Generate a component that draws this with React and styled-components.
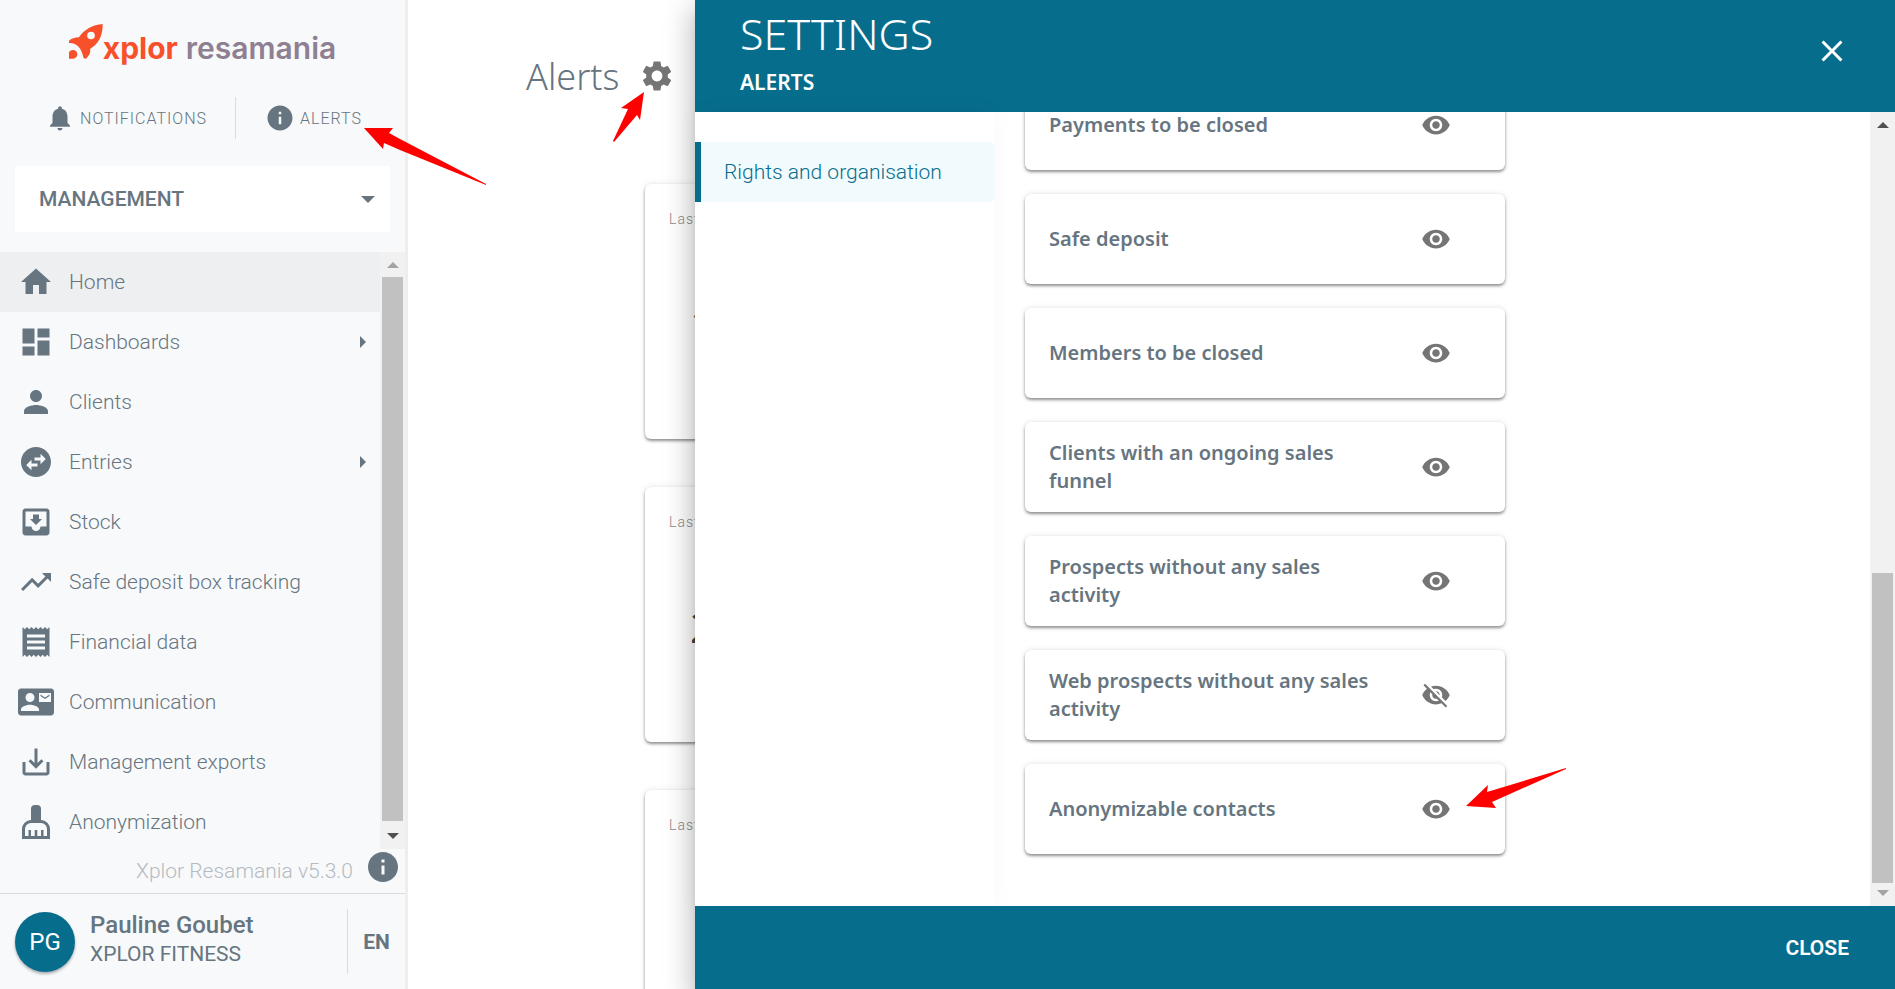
import styled, { createGlobalStyle } from "styled-components";
import {
    MdClose,
    MdContactMail,
    MdDashboard,
    MdHome,
    MdInfo,
    MdMoveToInbox,
    MdNotifications,
    MdPerson,
    MdReceipt,
    MdSaveAlt,
    MdSettings,
    MdSwapHorizontalCircle,
    MdTrendingUp,
    MdVisibility,
    MdVisibilityOff,
} from "react-icons/md";

const GlobalStyle = createGlobalStyle`
  * {
    box-sizing: border-box;
  }

  body {
    margin: 0;
    background: #fff;
    color: #667580;
    font-family: Roboto, sans-serif;
    font-size: 21px;
  }

  button, select {
    border: 0;
    padding: 0;
    background: none;
    color: inherit;
    font: inherit;
    cursor: pointer;
  }

  a {
    color: inherit;
    text-decoration: none;
  }

  h1, h2, p, ul {
    margin: 0;
    padding: 0;
  }

  ul {
    list-style: none;
  }

  svg {
    display: block;
    flex-shrink: 0;
  }
`;

const Page = styled.div`
  display: flex;
  height: 100vh;
  overflow: hidden;
`;

const Sidebar = styled.aside`
  display: flex;
  flex-direction: column;
  flex: 0 0 408px;
  background: #f8f9fb;
  border-right: 3px solid #eee;
`;

const Logo = styled.a`
  display: flex;
  justify-content: center;
  height: 84px;
  padding-top: 24px;
  font-family: Inter, sans-serif;
  font-size: 30px;
  line-height: 48px;
  .brand {
    color: #f8502a;
    font-weight: 700;
  }
  .product {
    margin-left: 8px;
    color: #8f7f92;
    font-weight: 600;
  }
`;

const TopLinks = styled.nav`
  display: flex;
  align-items: center;
  height: 68px;
`;

const TopLink = styled.a`
  display: flex;
  align-items: center;
  justify-content: flex-end;
  width: ${(props) => props.$width};
  gap: 5px;
  font-size: 16px;
  font-weight: 300;
  letter-spacing: 1px;
`;

const Divider = styled.span`
  width: 1px;
  height: ${(props) => props.$height};
  margin-left: ${(props) => props.$space || "0"};
  background: #d9dce0;
`;

const SelectBox = styled.label`
  display: flex;
  align-items: center;
  height: 66px;
  margin: 14px 15px 20px;
  padding-right: 15px;
  background: #fff;
  select {
    flex: 1;
    height: 66px;
    padding-left: 24px;
    appearance: none;
    font-weight: 500;
    outline: none;
  }
`;

const Triangle = styled.span`
  width: 0;
  height: 0;
  border: solid transparent;
  ${(props) => props.$dir === "down" && `
    border-width: ${props.$size}px ${props.$size}px 0;
    border-top-color: ${props.$color};
  `}
  ${(props) => props.$dir === "up" && `
    border-width: 0 ${props.$size}px ${props.$size}px;
    border-bottom-color: ${props.$color};
  `}
  ${(props) => props.$dir === "right" && `
    border-width: ${props.$size}px 0 ${props.$size}px ${props.$size}px;
    border-left-color: ${props.$color};
  `}
`;

const MenuArea = styled.div`
  display: flex;
  flex: 1;
  min-height: 0;
`;

const Menu = styled.ul`
  flex: 1;
  overflow: hidden;
`;

const MenuLink = styled.a`
  display: flex;
  align-items: center;
  height: 60px;
  gap: 15px;
  padding: 0 14px 0 18px;
  background: ${(props) => (props.$active ? "#eeeff0" : "transparent")};
  font-weight: 300;
  .label {
    flex: 1;
  }
`;

const Track = styled.div`
  display: flex;
  flex-direction: column;
  align-items: center;
  width: 25px;
  padding: 10px 0;
  background: #f1f1f1;
`;

const Thumb = styled.div`
  flex: 1;
  width: 21px;
  margin: ${(props) => props.$margin};
  background: #c1c1c1;
`;

const Version = styled.div`
  display: flex;
  align-items: center;
  justify-content: flex-end;
  height: 44px;
  gap: 12px;
  padding: 0 4px 8px 0;
  p {
    padding-top: 8px;
    color: #b5bbc1;
    font-weight: 300;
  }
`;

const Account = styled.footer`
  display: flex;
  align-items: center;
  height: 96px;
  padding-left: 15px;
  border-top: 1px solid #d9dce0;
  .who {
    flex: 1;
    padding: 0 0 6px 15px;
  }
  .name {
    font-size: 24px;
    font-weight: 500;
    line-height: 30px;
  }
  .club {
    line-height: 28px;
  }
`;

const Avatar = styled.div`
  width: 60px;
  height: 60px;
  border-radius: 50%;
  background: #076d8c;
  box-shadow: 0 2px 3px rgba(0, 0, 0, 0.3);
  color: #fff;
  font-size: 24px;
  line-height: 60px;
  text-align: center;
`;

const Language = styled.button`
  width: 57px;
  font-weight: 700;
`;

const Main = styled.main`
  flex: 1;
  overflow: hidden;
  padding: 52px 0 0 118px;
`;

const Title = styled.h1`
  display: flex;
  align-items: center;
  height: 48px;
  gap: 20px;
  font-family: "Noto Sans", sans-serif;
  font-size: 36px;
  font-weight: 300;
`;

const Tiles = styled.div`
  display: grid;
  gap: 48px;
  padding: 84px 40px 0 119px;
`;

const Tile = styled.section`
  height: 255px;
  padding: 24px;
  border-radius: 6px;
  background: #fff;
  box-shadow: 0 2px 3px rgba(0, 0, 0, 0.4), 0 0 6px rgba(0, 0, 0, 0.1);
  .updated {
    color: #8b8b8b;
    font-size: 14px;
    font-weight: 300;
    letter-spacing: 1px;
    line-height: 22px;
  }
  .count {
    padding: 64px 21px 0;
    color: #444;
    font-family: "Noto Sans", sans-serif;
    font-size: 42px;
    line-height: 60px;
  }
`;

const Drawer = styled.div`
  position: absolute;
  top: 0;
  right: 0;
  bottom: 0;
  left: 695px;
  display: flex;
  flex-direction: column;
  background: #fff;
  box-shadow:
    0 8px 10px -5px rgba(0, 0, 0, 0.2),
    0 16px 24px 2px rgba(0, 0, 0, 0.14),
    0 6px 30px 5px rgba(0, 0, 0, 0.12);
`;

const DrawerHeader = styled.header`
  display: flex;
  align-items: center;
  justify-content: space-between;
  height: 112px;
  padding: 0 45px 6px;
  background: #076d8c;
  color: #fff;
  font-family: "Noto Sans", sans-serif;
  h2 {
    font-size: 43px;
    font-weight: 300;
    line-height: 58px;
  }
  p {
    font-weight: 600;
    line-height: 38px;
  }
`;

const CloseButton = styled.button`
  padding-bottom: 4px;
`;

const DrawerBody = styled.div`
  display: flex;
  flex: 1;
  min-height: 0;
`;

const Sections = styled.nav`
  width: 300px;
  padding-top: 30px;
  box-shadow: 0 0 24px rgba(0, 0, 0, 0.03);
`;

const SectionLink = styled.a`
  display: block;
  border-left: 6px solid #076d8c;
  border-radius: 0 6px 6px 0;
  padding-left: 23px;
  background: #f1fbfe;
  color: #076d8c;
  font-weight: 300;
  line-height: 60px;
`;

const Settings = styled.ul`
  display: flex;
  flex: 1;
  flex-direction: column;
  justify-content: flex-end;
  gap: 24px;
  overflow: hidden;
  padding: 0 30px 52px;
`;

const SettingCard = styled.li`
  display: flex;
  flex-shrink: 0;
  align-items: center;
  justify-content: space-between;
  width: 480px;
  height: 90px;
  padding: 0 54px 0 24px;
  border-radius: 6px;
  box-shadow: 0 2px 3px rgba(0, 0, 0, 0.4), 0 0 6px rgba(0, 0, 0, 0.1);
  font-family: "Noto Sans", sans-serif;
  font-size: 20px;
  font-weight: 600;
  line-height: 28px;
  p {
    width: 336px;
  }
  button {
    color: #757575;
  }
`;

const DrawerFooter = styled.footer`
  display: flex;
  align-items: center;
  justify-content: flex-end;
  height: 83px;
  padding-right: 46px;
  background: #076d8c;
  color: #fff;
  button {
    font-weight: 600;
  }
`;

const Pointer = styled.svg`
  position: absolute;
  top: ${(props) => props.$top}px;
  left: ${(props) => props.$left}px;
  fill: #f00;
  pointer-events: none;
`;

function Rocket(){
    return (
        <svg width="34" height="35" viewBox="204 74 102 105" aria-hidden="true">
            <path
                fill="#f8502a"
                fillRule="evenodd"
                d="M305 74C275 76 249 91 234 114C222 114 210 118 204 124V131C228 130 241 146 247 173C248 179 254 180 258 175C265 167 270 159 267 149C291 136 306 110 305 74ZM270 97a11.500 11.500 0 1 1 0 23a11.500 11.500 0 1 1 0-23Z"
            />
            <path fill="#f8502a" d="M204 178V158C207 153 213 151 218 152C225 153 229 159 229 165C229 172 224 178 216 178Z" />
        </svg>
    )
}

function Brush({ size }){
    return (
        <svg width={size} height={size} viewBox="0 0 36 36" fill="currentColor" aria-hidden="true">
            <path d="M13 17V5a4 4 0 0 1 4-4h2a4 4 0 0 1 4 4v12z" />
            <path
                fillRule="evenodd"
                d="M4 35V25a9 9 0 0 1 9-9h10a9 9 0 0 1 9 9v10zM7 32h3.500v-6h2.500v6h3.700v-6h2.600v6h3.700v-6h2.500v6H29v-7a6 6 0 0 0-6-6H13a6 6 0 0 0-6 6z"
            />
        </svg>
    )
}

const menu = [
    { label: "Home", Icon: MdHome, active: true },
    { label: "Dashboards", Icon: MdDashboard, more: true },
    { label: "Clients", Icon: MdPerson },
    { label: "Entries", Icon: MdSwapHorizontalCircle, more: true },
    { label: "Stock", Icon: MdMoveToInbox },
    { label: "Safe deposit box tracking", Icon: MdTrendingUp },
    { label: "Financial data", Icon: MdReceipt },
    { label: "Communication", Icon: MdContactMail },
    { label: "Management exports", Icon: MdSaveAlt },
    { label: "Anonymization", Icon: Brush },
];

const settings = [
    { label: "Payments to be closed", visible: true },
    { label: "Safe deposit", visible: true },
    { label: "Members to be closed", visible: true },
    { label: "Clients with an ongoing sales funnel", visible: true },
    { label: "Prospects without any sales activity", visible: true },
    { label: "Web prospects without any sales activity", visible: false },
    { label: "Anonymizable contacts", visible: true },
];

const tiles = [
    { id: "payments", count: "1" },
    { id: "deposits", count: "2" },
    { id: "members", count: "" },
];

function App(){
    return (
        <Page>
            <GlobalStyle />
            <Sidebar>
                <Logo href="#">
                    <Rocket />
                    <span className="brand">xplor</span>
                    <span className="product">resamania</span>
                </Logo>
                <TopLinks>
                    <TopLink href="#" $width="207px"><MdNotifications size={30} />NOTIFICATIONS</TopLink>
                    <Divider $height="42px" $space="28px" />
                    <TopLink href="#" $width="126px"><MdInfo size={30} />ALERTS</TopLink>
                </TopLinks>
                <SelectBox>
                    <select aria-label="Workspace">
                        <option>MANAGEMENT</option>
                    </select>
                    <Triangle $dir="down" $size={7} $color="#667580" />
                </SelectBox>
                <MenuArea>
                    <Menu>
                        {menu.map(({ label, Icon, active, more })=>(
                            <li key={label}>
                                <MenuLink href="#" $active={active}>
                                    <Icon size={36} />
                                    <span className="label">{label}</span>
                                    {more && <Triangle $dir="right" $size={6} $color="#667580" />}
                                </MenuLink>
                            </li>
                        ))}
                    </Menu>
                    <Track>
                        <Triangle $dir="up" $size={6} $color="#a3a3a3" />
                        <Thumb $margin="9px 0 12px" />
                        <Triangle $dir="down" $size={6} $color="#505050" />
                    </Track>
                </MenuArea>
                <Version>
                    <p>Xplor Resamania v5.3.0</p>
                    <MdInfo size={36} />
                </Version>
                <Account>
                    <Avatar>PG</Avatar>
                    <div className="who">
                        <p className="name">Pauline Goubet</p>
                        <p className="club">XPLOR FITNESS</p>
                    </div>
                    <Divider $height="65px" />
                    <Language>EN</Language>
                </Account>
            </Sidebar>

            <Main>
                <Title>
                    Alerts
                    <button aria-label="Alert settings"><MdSettings size={36} color="#757575" /></button>
                </Title>
                <Tiles>
                    {tiles.map(({ id, count })=>(
                        <Tile key={id}>
                            <p className="updated">Last update</p>
                            <p className="count">{count}</p>
                        </Tile>
                    ))}
                </Tiles>
            </Main>

            <Drawer role="dialog" aria-label="Settings">
                <DrawerHeader>
                    <div>
                        <h2>SETTINGS</h2>
                        <p>ALERTS</p>
                    </div>
                    <CloseButton aria-label="Close settings"><MdClose size={36} /></CloseButton>
                </DrawerHeader>
                <DrawerBody>
                    <Sections>
                        <SectionLink href="#">Rights and organisation</SectionLink>
                    </Sections>
                    <Settings>
                        {settings.map(({ label, visible })=>(
                            <SettingCard key={label}>
                                <p>{label}</p>
                                <button aria-label={`Toggle ${label}`}>
                                    {visible ? <MdVisibility size={30} /> : <MdVisibilityOff size={30} />}
                                </button>
                            </SettingCard>
                        ))}
                    </Settings>
                    <Track>
                        <Triangle $dir="up" $size={6} $color="#505050" />
                        <Thumb $margin="445px 0 7px" />
                        <Triangle $dir="down" $size={6} $color="#a3a3a3" />
                    </Track>
                </DrawerBody>
                <DrawerFooter>
                    <button>CLOSE</button>
                </DrawerFooter>
            </Drawer>

            <Pointer $left={364} $top={127} width="124" height="60" aria-hidden="true">
                <path d="M0 1L29 1L25 6L36 12L122 57L122 58L36 23L20 16L19 22Z" />
            </Pointer>
            <Pointer $left={612} $top={91} width="34" height="52" aria-hidden="true">
                <path d="M32 1L9 17L16 18L1 50L2 51L25 24L28 29Z" />
            </Pointer>
            <Pointer $left={1466} $top={767} width="102" height="42" aria-hidden="true">
                <path d="M0 39L22 18L21 25L100 1L100 2L26 35L30 41Z" />
            </Pointer>
        </Page>
    )
}

export default App;
